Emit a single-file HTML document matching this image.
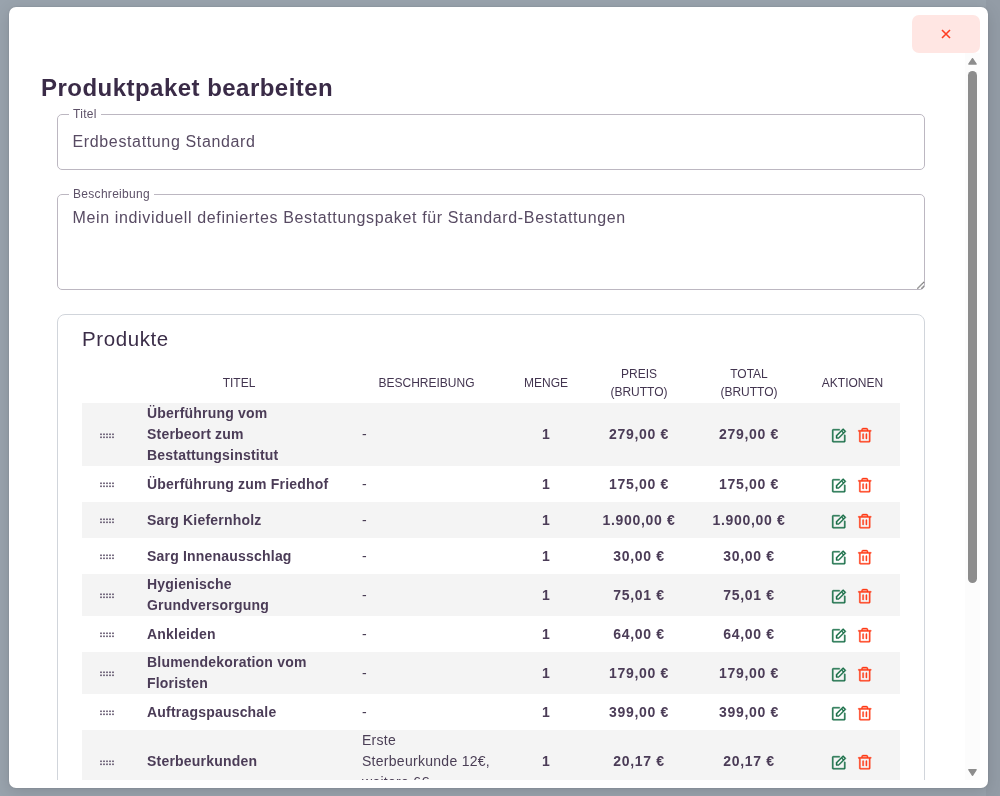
<!DOCTYPE html>
<html><head><meta charset="utf-8">
<style>
*{box-sizing:border-box;}
html,body{margin:0;padding:0;width:1000px;height:796px;overflow:hidden;}
.clip,.close{will-change:transform;}
body{background:#99a3ad;font-family:"Liberation Sans",sans-serif;color:#3b2d48;position:relative;}
.modal{position:absolute;left:9px;top:7px;width:979px;height:781px;background:#fff;border-radius:7px;box-shadow:0 0 2px rgba(0,0,0,0.14),0 4px 16px rgba(0,0,0,0.13);}
.close{position:absolute;left:912px;top:15px;width:68px;height:38px;background:#ffe6e3;border-radius:7px;}
.close svg{position:absolute;left:29px;top:14px;}
.clip{position:absolute;left:0;top:53px;width:965px;height:727px;overflow:hidden;}
.inner{position:absolute;left:0;top:-53px;width:965px;height:900px;}
.track{position:absolute;left:965px;top:53px;width:15px;height:727px;background:#fcfcfc;}
.thumb{position:absolute;left:968px;top:71px;width:9px;height:512px;background:#8c8c8c;border-radius:5px;}
h1{position:absolute;left:41px;top:73px;margin:0;font-size:24px;font-weight:700;letter-spacing:0.47px;color:#3a2b47;white-space:nowrap;line-height:30px;}
.fs{position:absolute;left:57px;width:868px;border:1px solid #bcb7c1;border-radius:5px;}
.legend{position:absolute;left:11px;top:-9px;padding:0 4px;background:#fff;font-size:12px;line-height:16px;color:#5d5168;letter-spacing:0.3px;white-space:nowrap;}
.val{position:absolute;left:14.5px;font-size:16px;line-height:20px;color:#584b63;white-space:nowrap;}
.card{position:absolute;left:57px;top:314px;width:868px;height:600px;border:1px solid #d1d5db;border-radius:8px;}
.card h2{position:absolute;left:24px;top:11px;margin:0;font-size:20.5px;letter-spacing:0.6px;font-weight:400;line-height:26px;color:#3b2d48;white-space:nowrap;}
table{position:absolute;left:82px;top:365px;border-collapse:collapse;table-layout:fixed;width:818px;}
th{font-size:12px;font-weight:400;line-height:18px;height:38px;padding:0 4px 2px;text-align:center;color:#433550;vertical-align:middle;}
td{font-size:14px;line-height:21px;padding:0 16px;vertical-align:middle;height:36px;color:#4b3c57;}
tbody tr:nth-child(odd){background:#f4f4f4;}
td.t{font-weight:700;letter-spacing:0.2px;white-space:nowrap;padding-left:15px;}
td.d{letter-spacing:0.28px;white-space:nowrap;color:#4a3e55;}
td.c{text-align:center;font-weight:700;}
td.p{text-align:center;font-weight:700;letter-spacing:0.7px;white-space:nowrap;padding:0;}
td.a{padding:0;position:relative;}
.drag{display:block;position:relative;margin-left:18px;top:1px;}
.drag i{position:absolute;width:2px;height:2px;background:#756a80;}
.ic{position:absolute;top:50%;margin-top:-7.2px;}
</style></head><body>
<div style="position:absolute;left:986px;top:0;width:14px;height:796px;background:rgba(0,0,0,0.04)"></div>
<div class="modal"></div>
<div class="close" style="position:absolute"><svg width="10" height="10" viewBox="0 0 10 10"><path d="M1 1L9 9M9 1L1 9" stroke="#ff3d22" stroke-width="1.6" stroke-linecap="butt"/></svg></div>
<div class="clip"><div class="inner">
<h1>Produktpaket bearbeiten</h1>
<div class="fs" style="top:114px;height:56px;"><div class="legend">Titel</div><div class="val" style="top:17px;letter-spacing:0.64px;">Erdbestattung Standard</div></div>
<div class="fs" style="top:194px;height:96px;"><div class="legend">Beschreibung</div><div class="val" style="top:13px;letter-spacing:0.64px;">Mein individuell definiertes Bestattungspaket für Standard-Bestattungen</div></div>
<svg style="position:absolute;left:914px;top:279px" width="12" height="12" viewBox="0 0 12 12"><path d="M3.5 9.5L10 3M7.5 9.5L10 7" stroke="#444" stroke-width="1.2" stroke-dasharray="0.9 0.5" fill="none"/></svg>
<div class="card"><h2>Produkte</h2></div>
<table>
<colgroup><col style="width:50px"><col style="width:214px"><col style="width:161px"><col style="width:78px"><col style="width:108px"><col style="width:112px"><col style="width:95px"></colgroup>
<thead><tr><th></th><th>TITEL</th><th>BESCHREIBUNG</th><th>MENGE</th><th>PREIS<br>(BRUTTO)</th><th>TOTAL<br>(BRUTTO)</th><th>AKTIONEN</th></tr></thead>
<tbody>
<tr><td style="padding:0"><svg class="drag" width="15" height="6" viewBox="0 0 15 6"><rect x="0.20" y="0.5" width="1.6" height="1.6" fill="#5a4e66"/><rect x="3.20" y="0.5" width="1.6" height="1.6" fill="#5a4e66"/><rect x="6.20" y="0.5" width="1.6" height="1.6" fill="#5a4e66"/><rect x="9.20" y="0.5" width="1.6" height="1.6" fill="#5a4e66"/><rect x="12.20" y="0.5" width="1.6" height="1.6" fill="#5a4e66"/><rect x="0.20" y="3.5" width="1.6" height="1.6" fill="#5a4e66"/><rect x="3.20" y="3.5" width="1.6" height="1.6" fill="#5a4e66"/><rect x="6.20" y="3.5" width="1.6" height="1.6" fill="#5a4e66"/><rect x="9.20" y="3.5" width="1.6" height="1.6" fill="#5a4e66"/><rect x="12.20" y="3.5" width="1.6" height="1.6" fill="#5a4e66"/></svg></td><td class="t">Überführung vom<br>Sterbeort zum<br>Bestattungsinstitut</td><td class="d">-</td><td class="c">1</td><td class="p">279,00 €</td><td class="p">279,00 €</td><td class="a"><svg class="ic" style="left:25px" width="17.5" height="17.5" viewBox="0 0 256 256"><path fill="#156d45" stroke="#156d45" stroke-width="6" stroke-linejoin="round" d="M229.66,58.34l-32-32a8,8,0,0,0-11.32,0l-96,96A8,8,0,0,0,88,128v32a8,8,0,0,0,8,8h32a8,8,0,0,0,5.66-2.34l96-96A8,8,0,0,0,229.66,58.34ZM124.69,152H104V131.31l64-64L188.69,88ZM200,76.69,179.31,56,192,43.31,212.69,64ZM224,120v88a16,16,0,0,1-16,16H48a16,16,0,0,1-16-16V48A16,16,0,0,1,48,32h88a8,8,0,0,1,0,16H48V208H208V120a8,8,0,0,1,16,0Z"/></svg><svg class="ic" style="left:51px" width="17.5" height="17.5" viewBox="0 0 256 256"><path fill="#ff3a16" stroke="#ff3a16" stroke-width="6" stroke-linejoin="round" d="M216,48H176V40a24,24,0,0,0-24-24H104A24,24,0,0,0,80,40v8H40a8,8,0,0,0,0,16h8V208a16,16,0,0,0,16,16H192a16,16,0,0,0,16-16V64h8a8,8,0,0,0,0-16ZM96,40a8,8,0,0,1,8-8h48a8,8,0,0,1,8,8v8H96Zm96,168H64V64H192ZM112,104v64a8,8,0,0,1-16,0V104a8,8,0,0,1,16,0Zm48,0v64a8,8,0,0,1-16,0V104a8,8,0,0,1,16,0Z"/></svg></td></tr>
<tr><td style="padding:0"><svg class="drag" width="15" height="6" viewBox="0 0 15 6"><rect x="0.20" y="0.5" width="1.6" height="1.6" fill="#5a4e66"/><rect x="3.20" y="0.5" width="1.6" height="1.6" fill="#5a4e66"/><rect x="6.20" y="0.5" width="1.6" height="1.6" fill="#5a4e66"/><rect x="9.20" y="0.5" width="1.6" height="1.6" fill="#5a4e66"/><rect x="12.20" y="0.5" width="1.6" height="1.6" fill="#5a4e66"/><rect x="0.20" y="3.5" width="1.6" height="1.6" fill="#5a4e66"/><rect x="3.20" y="3.5" width="1.6" height="1.6" fill="#5a4e66"/><rect x="6.20" y="3.5" width="1.6" height="1.6" fill="#5a4e66"/><rect x="9.20" y="3.5" width="1.6" height="1.6" fill="#5a4e66"/><rect x="12.20" y="3.5" width="1.6" height="1.6" fill="#5a4e66"/></svg></td><td class="t">Überführung zum Friedhof</td><td class="d">-</td><td class="c">1</td><td class="p">175,00 €</td><td class="p">175,00 €</td><td class="a"><svg class="ic" style="left:25px" width="17.5" height="17.5" viewBox="0 0 256 256"><path fill="#156d45" stroke="#156d45" stroke-width="6" stroke-linejoin="round" d="M229.66,58.34l-32-32a8,8,0,0,0-11.32,0l-96,96A8,8,0,0,0,88,128v32a8,8,0,0,0,8,8h32a8,8,0,0,0,5.66-2.34l96-96A8,8,0,0,0,229.66,58.34ZM124.69,152H104V131.31l64-64L188.69,88ZM200,76.69,179.31,56,192,43.31,212.69,64ZM224,120v88a16,16,0,0,1-16,16H48a16,16,0,0,1-16-16V48A16,16,0,0,1,48,32h88a8,8,0,0,1,0,16H48V208H208V120a8,8,0,0,1,16,0Z"/></svg><svg class="ic" style="left:51px" width="17.5" height="17.5" viewBox="0 0 256 256"><path fill="#ff3a16" stroke="#ff3a16" stroke-width="6" stroke-linejoin="round" d="M216,48H176V40a24,24,0,0,0-24-24H104A24,24,0,0,0,80,40v8H40a8,8,0,0,0,0,16h8V208a16,16,0,0,0,16,16H192a16,16,0,0,0,16-16V64h8a8,8,0,0,0,0-16ZM96,40a8,8,0,0,1,8-8h48a8,8,0,0,1,8,8v8H96Zm96,168H64V64H192ZM112,104v64a8,8,0,0,1-16,0V104a8,8,0,0,1,16,0Zm48,0v64a8,8,0,0,1-16,0V104a8,8,0,0,1,16,0Z"/></svg></td></tr>
<tr><td style="padding:0"><svg class="drag" width="15" height="6" viewBox="0 0 15 6"><rect x="0.20" y="0.5" width="1.6" height="1.6" fill="#5a4e66"/><rect x="3.20" y="0.5" width="1.6" height="1.6" fill="#5a4e66"/><rect x="6.20" y="0.5" width="1.6" height="1.6" fill="#5a4e66"/><rect x="9.20" y="0.5" width="1.6" height="1.6" fill="#5a4e66"/><rect x="12.20" y="0.5" width="1.6" height="1.6" fill="#5a4e66"/><rect x="0.20" y="3.5" width="1.6" height="1.6" fill="#5a4e66"/><rect x="3.20" y="3.5" width="1.6" height="1.6" fill="#5a4e66"/><rect x="6.20" y="3.5" width="1.6" height="1.6" fill="#5a4e66"/><rect x="9.20" y="3.5" width="1.6" height="1.6" fill="#5a4e66"/><rect x="12.20" y="3.5" width="1.6" height="1.6" fill="#5a4e66"/></svg></td><td class="t">Sarg Kiefernholz</td><td class="d">-</td><td class="c">1</td><td class="p">1.900,00 €</td><td class="p">1.900,00 €</td><td class="a"><svg class="ic" style="left:25px" width="17.5" height="17.5" viewBox="0 0 256 256"><path fill="#156d45" stroke="#156d45" stroke-width="6" stroke-linejoin="round" d="M229.66,58.34l-32-32a8,8,0,0,0-11.32,0l-96,96A8,8,0,0,0,88,128v32a8,8,0,0,0,8,8h32a8,8,0,0,0,5.66-2.34l96-96A8,8,0,0,0,229.66,58.34ZM124.69,152H104V131.31l64-64L188.69,88ZM200,76.69,179.31,56,192,43.31,212.69,64ZM224,120v88a16,16,0,0,1-16,16H48a16,16,0,0,1-16-16V48A16,16,0,0,1,48,32h88a8,8,0,0,1,0,16H48V208H208V120a8,8,0,0,1,16,0Z"/></svg><svg class="ic" style="left:51px" width="17.5" height="17.5" viewBox="0 0 256 256"><path fill="#ff3a16" stroke="#ff3a16" stroke-width="6" stroke-linejoin="round" d="M216,48H176V40a24,24,0,0,0-24-24H104A24,24,0,0,0,80,40v8H40a8,8,0,0,0,0,16h8V208a16,16,0,0,0,16,16H192a16,16,0,0,0,16-16V64h8a8,8,0,0,0,0-16ZM96,40a8,8,0,0,1,8-8h48a8,8,0,0,1,8,8v8H96Zm96,168H64V64H192ZM112,104v64a8,8,0,0,1-16,0V104a8,8,0,0,1,16,0Zm48,0v64a8,8,0,0,1-16,0V104a8,8,0,0,1,16,0Z"/></svg></td></tr>
<tr><td style="padding:0"><svg class="drag" width="15" height="6" viewBox="0 0 15 6"><rect x="0.20" y="0.5" width="1.6" height="1.6" fill="#5a4e66"/><rect x="3.20" y="0.5" width="1.6" height="1.6" fill="#5a4e66"/><rect x="6.20" y="0.5" width="1.6" height="1.6" fill="#5a4e66"/><rect x="9.20" y="0.5" width="1.6" height="1.6" fill="#5a4e66"/><rect x="12.20" y="0.5" width="1.6" height="1.6" fill="#5a4e66"/><rect x="0.20" y="3.5" width="1.6" height="1.6" fill="#5a4e66"/><rect x="3.20" y="3.5" width="1.6" height="1.6" fill="#5a4e66"/><rect x="6.20" y="3.5" width="1.6" height="1.6" fill="#5a4e66"/><rect x="9.20" y="3.5" width="1.6" height="1.6" fill="#5a4e66"/><rect x="12.20" y="3.5" width="1.6" height="1.6" fill="#5a4e66"/></svg></td><td class="t">Sarg Innenausschlag</td><td class="d">-</td><td class="c">1</td><td class="p">30,00 €</td><td class="p">30,00 €</td><td class="a"><svg class="ic" style="left:25px" width="17.5" height="17.5" viewBox="0 0 256 256"><path fill="#156d45" stroke="#156d45" stroke-width="6" stroke-linejoin="round" d="M229.66,58.34l-32-32a8,8,0,0,0-11.32,0l-96,96A8,8,0,0,0,88,128v32a8,8,0,0,0,8,8h32a8,8,0,0,0,5.66-2.34l96-96A8,8,0,0,0,229.66,58.34ZM124.69,152H104V131.31l64-64L188.69,88ZM200,76.69,179.31,56,192,43.31,212.69,64ZM224,120v88a16,16,0,0,1-16,16H48a16,16,0,0,1-16-16V48A16,16,0,0,1,48,32h88a8,8,0,0,1,0,16H48V208H208V120a8,8,0,0,1,16,0Z"/></svg><svg class="ic" style="left:51px" width="17.5" height="17.5" viewBox="0 0 256 256"><path fill="#ff3a16" stroke="#ff3a16" stroke-width="6" stroke-linejoin="round" d="M216,48H176V40a24,24,0,0,0-24-24H104A24,24,0,0,0,80,40v8H40a8,8,0,0,0,0,16h8V208a16,16,0,0,0,16,16H192a16,16,0,0,0,16-16V64h8a8,8,0,0,0,0-16ZM96,40a8,8,0,0,1,8-8h48a8,8,0,0,1,8,8v8H96Zm96,168H64V64H192ZM112,104v64a8,8,0,0,1-16,0V104a8,8,0,0,1,16,0Zm48,0v64a8,8,0,0,1-16,0V104a8,8,0,0,1,16,0Z"/></svg></td></tr>
<tr><td style="padding:0"><svg class="drag" width="15" height="6" viewBox="0 0 15 6"><rect x="0.20" y="0.5" width="1.6" height="1.6" fill="#5a4e66"/><rect x="3.20" y="0.5" width="1.6" height="1.6" fill="#5a4e66"/><rect x="6.20" y="0.5" width="1.6" height="1.6" fill="#5a4e66"/><rect x="9.20" y="0.5" width="1.6" height="1.6" fill="#5a4e66"/><rect x="12.20" y="0.5" width="1.6" height="1.6" fill="#5a4e66"/><rect x="0.20" y="3.5" width="1.6" height="1.6" fill="#5a4e66"/><rect x="3.20" y="3.5" width="1.6" height="1.6" fill="#5a4e66"/><rect x="6.20" y="3.5" width="1.6" height="1.6" fill="#5a4e66"/><rect x="9.20" y="3.5" width="1.6" height="1.6" fill="#5a4e66"/><rect x="12.20" y="3.5" width="1.6" height="1.6" fill="#5a4e66"/></svg></td><td class="t">Hygienische<br>Grundversorgung</td><td class="d">-</td><td class="c">1</td><td class="p">75,01 €</td><td class="p">75,01 €</td><td class="a"><svg class="ic" style="left:25px" width="17.5" height="17.5" viewBox="0 0 256 256"><path fill="#156d45" stroke="#156d45" stroke-width="6" stroke-linejoin="round" d="M229.66,58.34l-32-32a8,8,0,0,0-11.32,0l-96,96A8,8,0,0,0,88,128v32a8,8,0,0,0,8,8h32a8,8,0,0,0,5.66-2.34l96-96A8,8,0,0,0,229.66,58.34ZM124.69,152H104V131.31l64-64L188.69,88ZM200,76.69,179.31,56,192,43.31,212.69,64ZM224,120v88a16,16,0,0,1-16,16H48a16,16,0,0,1-16-16V48A16,16,0,0,1,48,32h88a8,8,0,0,1,0,16H48V208H208V120a8,8,0,0,1,16,0Z"/></svg><svg class="ic" style="left:51px" width="17.5" height="17.5" viewBox="0 0 256 256"><path fill="#ff3a16" stroke="#ff3a16" stroke-width="6" stroke-linejoin="round" d="M216,48H176V40a24,24,0,0,0-24-24H104A24,24,0,0,0,80,40v8H40a8,8,0,0,0,0,16h8V208a16,16,0,0,0,16,16H192a16,16,0,0,0,16-16V64h8a8,8,0,0,0,0-16ZM96,40a8,8,0,0,1,8-8h48a8,8,0,0,1,8,8v8H96Zm96,168H64V64H192ZM112,104v64a8,8,0,0,1-16,0V104a8,8,0,0,1,16,0Zm48,0v64a8,8,0,0,1-16,0V104a8,8,0,0,1,16,0Z"/></svg></td></tr>
<tr><td style="padding:0"><svg class="drag" width="15" height="6" viewBox="0 0 15 6"><rect x="0.20" y="0.5" width="1.6" height="1.6" fill="#5a4e66"/><rect x="3.20" y="0.5" width="1.6" height="1.6" fill="#5a4e66"/><rect x="6.20" y="0.5" width="1.6" height="1.6" fill="#5a4e66"/><rect x="9.20" y="0.5" width="1.6" height="1.6" fill="#5a4e66"/><rect x="12.20" y="0.5" width="1.6" height="1.6" fill="#5a4e66"/><rect x="0.20" y="3.5" width="1.6" height="1.6" fill="#5a4e66"/><rect x="3.20" y="3.5" width="1.6" height="1.6" fill="#5a4e66"/><rect x="6.20" y="3.5" width="1.6" height="1.6" fill="#5a4e66"/><rect x="9.20" y="3.5" width="1.6" height="1.6" fill="#5a4e66"/><rect x="12.20" y="3.5" width="1.6" height="1.6" fill="#5a4e66"/></svg></td><td class="t">Ankleiden</td><td class="d">-</td><td class="c">1</td><td class="p">64,00 €</td><td class="p">64,00 €</td><td class="a"><svg class="ic" style="left:25px" width="17.5" height="17.5" viewBox="0 0 256 256"><path fill="#156d45" stroke="#156d45" stroke-width="6" stroke-linejoin="round" d="M229.66,58.34l-32-32a8,8,0,0,0-11.32,0l-96,96A8,8,0,0,0,88,128v32a8,8,0,0,0,8,8h32a8,8,0,0,0,5.66-2.34l96-96A8,8,0,0,0,229.66,58.34ZM124.69,152H104V131.31l64-64L188.69,88ZM200,76.69,179.31,56,192,43.31,212.69,64ZM224,120v88a16,16,0,0,1-16,16H48a16,16,0,0,1-16-16V48A16,16,0,0,1,48,32h88a8,8,0,0,1,0,16H48V208H208V120a8,8,0,0,1,16,0Z"/></svg><svg class="ic" style="left:51px" width="17.5" height="17.5" viewBox="0 0 256 256"><path fill="#ff3a16" stroke="#ff3a16" stroke-width="6" stroke-linejoin="round" d="M216,48H176V40a24,24,0,0,0-24-24H104A24,24,0,0,0,80,40v8H40a8,8,0,0,0,0,16h8V208a16,16,0,0,0,16,16H192a16,16,0,0,0,16-16V64h8a8,8,0,0,0,0-16ZM96,40a8,8,0,0,1,8-8h48a8,8,0,0,1,8,8v8H96Zm96,168H64V64H192ZM112,104v64a8,8,0,0,1-16,0V104a8,8,0,0,1,16,0Zm48,0v64a8,8,0,0,1-16,0V104a8,8,0,0,1,16,0Z"/></svg></td></tr>
<tr><td style="padding:0"><svg class="drag" width="15" height="6" viewBox="0 0 15 6"><rect x="0.20" y="0.5" width="1.6" height="1.6" fill="#5a4e66"/><rect x="3.20" y="0.5" width="1.6" height="1.6" fill="#5a4e66"/><rect x="6.20" y="0.5" width="1.6" height="1.6" fill="#5a4e66"/><rect x="9.20" y="0.5" width="1.6" height="1.6" fill="#5a4e66"/><rect x="12.20" y="0.5" width="1.6" height="1.6" fill="#5a4e66"/><rect x="0.20" y="3.5" width="1.6" height="1.6" fill="#5a4e66"/><rect x="3.20" y="3.5" width="1.6" height="1.6" fill="#5a4e66"/><rect x="6.20" y="3.5" width="1.6" height="1.6" fill="#5a4e66"/><rect x="9.20" y="3.5" width="1.6" height="1.6" fill="#5a4e66"/><rect x="12.20" y="3.5" width="1.6" height="1.6" fill="#5a4e66"/></svg></td><td class="t">Blumendekoration vom<br>Floristen</td><td class="d">-</td><td class="c">1</td><td class="p">179,00 €</td><td class="p">179,00 €</td><td class="a"><svg class="ic" style="left:25px" width="17.5" height="17.5" viewBox="0 0 256 256"><path fill="#156d45" stroke="#156d45" stroke-width="6" stroke-linejoin="round" d="M229.66,58.34l-32-32a8,8,0,0,0-11.32,0l-96,96A8,8,0,0,0,88,128v32a8,8,0,0,0,8,8h32a8,8,0,0,0,5.66-2.34l96-96A8,8,0,0,0,229.66,58.34ZM124.69,152H104V131.31l64-64L188.69,88ZM200,76.69,179.31,56,192,43.31,212.69,64ZM224,120v88a16,16,0,0,1-16,16H48a16,16,0,0,1-16-16V48A16,16,0,0,1,48,32h88a8,8,0,0,1,0,16H48V208H208V120a8,8,0,0,1,16,0Z"/></svg><svg class="ic" style="left:51px" width="17.5" height="17.5" viewBox="0 0 256 256"><path fill="#ff3a16" stroke="#ff3a16" stroke-width="6" stroke-linejoin="round" d="M216,48H176V40a24,24,0,0,0-24-24H104A24,24,0,0,0,80,40v8H40a8,8,0,0,0,0,16h8V208a16,16,0,0,0,16,16H192a16,16,0,0,0,16-16V64h8a8,8,0,0,0,0-16ZM96,40a8,8,0,0,1,8-8h48a8,8,0,0,1,8,8v8H96Zm96,168H64V64H192ZM112,104v64a8,8,0,0,1-16,0V104a8,8,0,0,1,16,0Zm48,0v64a8,8,0,0,1-16,0V104a8,8,0,0,1,16,0Z"/></svg></td></tr>
<tr><td style="padding:0"><svg class="drag" width="15" height="6" viewBox="0 0 15 6"><rect x="0.20" y="0.5" width="1.6" height="1.6" fill="#5a4e66"/><rect x="3.20" y="0.5" width="1.6" height="1.6" fill="#5a4e66"/><rect x="6.20" y="0.5" width="1.6" height="1.6" fill="#5a4e66"/><rect x="9.20" y="0.5" width="1.6" height="1.6" fill="#5a4e66"/><rect x="12.20" y="0.5" width="1.6" height="1.6" fill="#5a4e66"/><rect x="0.20" y="3.5" width="1.6" height="1.6" fill="#5a4e66"/><rect x="3.20" y="3.5" width="1.6" height="1.6" fill="#5a4e66"/><rect x="6.20" y="3.5" width="1.6" height="1.6" fill="#5a4e66"/><rect x="9.20" y="3.5" width="1.6" height="1.6" fill="#5a4e66"/><rect x="12.20" y="3.5" width="1.6" height="1.6" fill="#5a4e66"/></svg></td><td class="t">Auftragspauschale</td><td class="d">-</td><td class="c">1</td><td class="p">399,00 €</td><td class="p">399,00 €</td><td class="a"><svg class="ic" style="left:25px" width="17.5" height="17.5" viewBox="0 0 256 256"><path fill="#156d45" stroke="#156d45" stroke-width="6" stroke-linejoin="round" d="M229.66,58.34l-32-32a8,8,0,0,0-11.32,0l-96,96A8,8,0,0,0,88,128v32a8,8,0,0,0,8,8h32a8,8,0,0,0,5.66-2.34l96-96A8,8,0,0,0,229.66,58.34ZM124.69,152H104V131.31l64-64L188.69,88ZM200,76.69,179.31,56,192,43.31,212.69,64ZM224,120v88a16,16,0,0,1-16,16H48a16,16,0,0,1-16-16V48A16,16,0,0,1,48,32h88a8,8,0,0,1,0,16H48V208H208V120a8,8,0,0,1,16,0Z"/></svg><svg class="ic" style="left:51px" width="17.5" height="17.5" viewBox="0 0 256 256"><path fill="#ff3a16" stroke="#ff3a16" stroke-width="6" stroke-linejoin="round" d="M216,48H176V40a24,24,0,0,0-24-24H104A24,24,0,0,0,80,40v8H40a8,8,0,0,0,0,16h8V208a16,16,0,0,0,16,16H192a16,16,0,0,0,16-16V64h8a8,8,0,0,0,0-16ZM96,40a8,8,0,0,1,8-8h48a8,8,0,0,1,8,8v8H96Zm96,168H64V64H192ZM112,104v64a8,8,0,0,1-16,0V104a8,8,0,0,1,16,0Zm48,0v64a8,8,0,0,1-16,0V104a8,8,0,0,1,16,0Z"/></svg></td></tr>
<tr><td style="padding:0"><svg class="drag" width="15" height="6" viewBox="0 0 15 6"><rect x="0.20" y="0.5" width="1.6" height="1.6" fill="#5a4e66"/><rect x="3.20" y="0.5" width="1.6" height="1.6" fill="#5a4e66"/><rect x="6.20" y="0.5" width="1.6" height="1.6" fill="#5a4e66"/><rect x="9.20" y="0.5" width="1.6" height="1.6" fill="#5a4e66"/><rect x="12.20" y="0.5" width="1.6" height="1.6" fill="#5a4e66"/><rect x="0.20" y="3.5" width="1.6" height="1.6" fill="#5a4e66"/><rect x="3.20" y="3.5" width="1.6" height="1.6" fill="#5a4e66"/><rect x="6.20" y="3.5" width="1.6" height="1.6" fill="#5a4e66"/><rect x="9.20" y="3.5" width="1.6" height="1.6" fill="#5a4e66"/><rect x="12.20" y="3.5" width="1.6" height="1.6" fill="#5a4e66"/></svg></td><td class="t">Sterbeurkunden</td><td class="d">Erste<br>Sterbeurkunde 12€,<br>weitere 6€</td><td class="c">1</td><td class="p">20,17 €</td><td class="p">20,17 €</td><td class="a"><svg class="ic" style="left:25px" width="17.5" height="17.5" viewBox="0 0 256 256"><path fill="#156d45" stroke="#156d45" stroke-width="6" stroke-linejoin="round" d="M229.66,58.34l-32-32a8,8,0,0,0-11.32,0l-96,96A8,8,0,0,0,88,128v32a8,8,0,0,0,8,8h32a8,8,0,0,0,5.66-2.34l96-96A8,8,0,0,0,229.66,58.34ZM124.69,152H104V131.31l64-64L188.69,88ZM200,76.69,179.31,56,192,43.31,212.69,64ZM224,120v88a16,16,0,0,1-16,16H48a16,16,0,0,1-16-16V48A16,16,0,0,1,48,32h88a8,8,0,0,1,0,16H48V208H208V120a8,8,0,0,1,16,0Z"/></svg><svg class="ic" style="left:51px" width="17.5" height="17.5" viewBox="0 0 256 256"><path fill="#ff3a16" stroke="#ff3a16" stroke-width="6" stroke-linejoin="round" d="M216,48H176V40a24,24,0,0,0-24-24H104A24,24,0,0,0,80,40v8H40a8,8,0,0,0,0,16h8V208a16,16,0,0,0,16,16H192a16,16,0,0,0,16-16V64h8a8,8,0,0,0,0-16ZM96,40a8,8,0,0,1,8-8h48a8,8,0,0,1,8,8v8H96Zm96,168H64V64H192ZM112,104v64a8,8,0,0,1-16,0V104a8,8,0,0,1,16,0Zm48,0v64a8,8,0,0,1-16,0V104a8,8,0,0,1,16,0Z"/></svg></td></tr>
</tbody></table>
</div></div>
<div class="track"></div>
<div class="thumb"></div>
<svg style="position:absolute;left:965px;top:53px" width="15" height="15" viewBox="0 0 15 15"><path d="M7.5 5.6L11.2 11H3.8Z" fill="#8c8c8c" stroke="#8c8c8c" stroke-width="1.3" stroke-linejoin="round"/></svg>
<svg style="position:absolute;left:965px;top:765px" width="15" height="15" viewBox="0 0 15 15"><path d="M7.5 10.3L11.2 4.7H3.8Z" fill="#8c8c8c" stroke="#8c8c8c" stroke-width="1.3" stroke-linejoin="round"/></svg>
</body></html>
